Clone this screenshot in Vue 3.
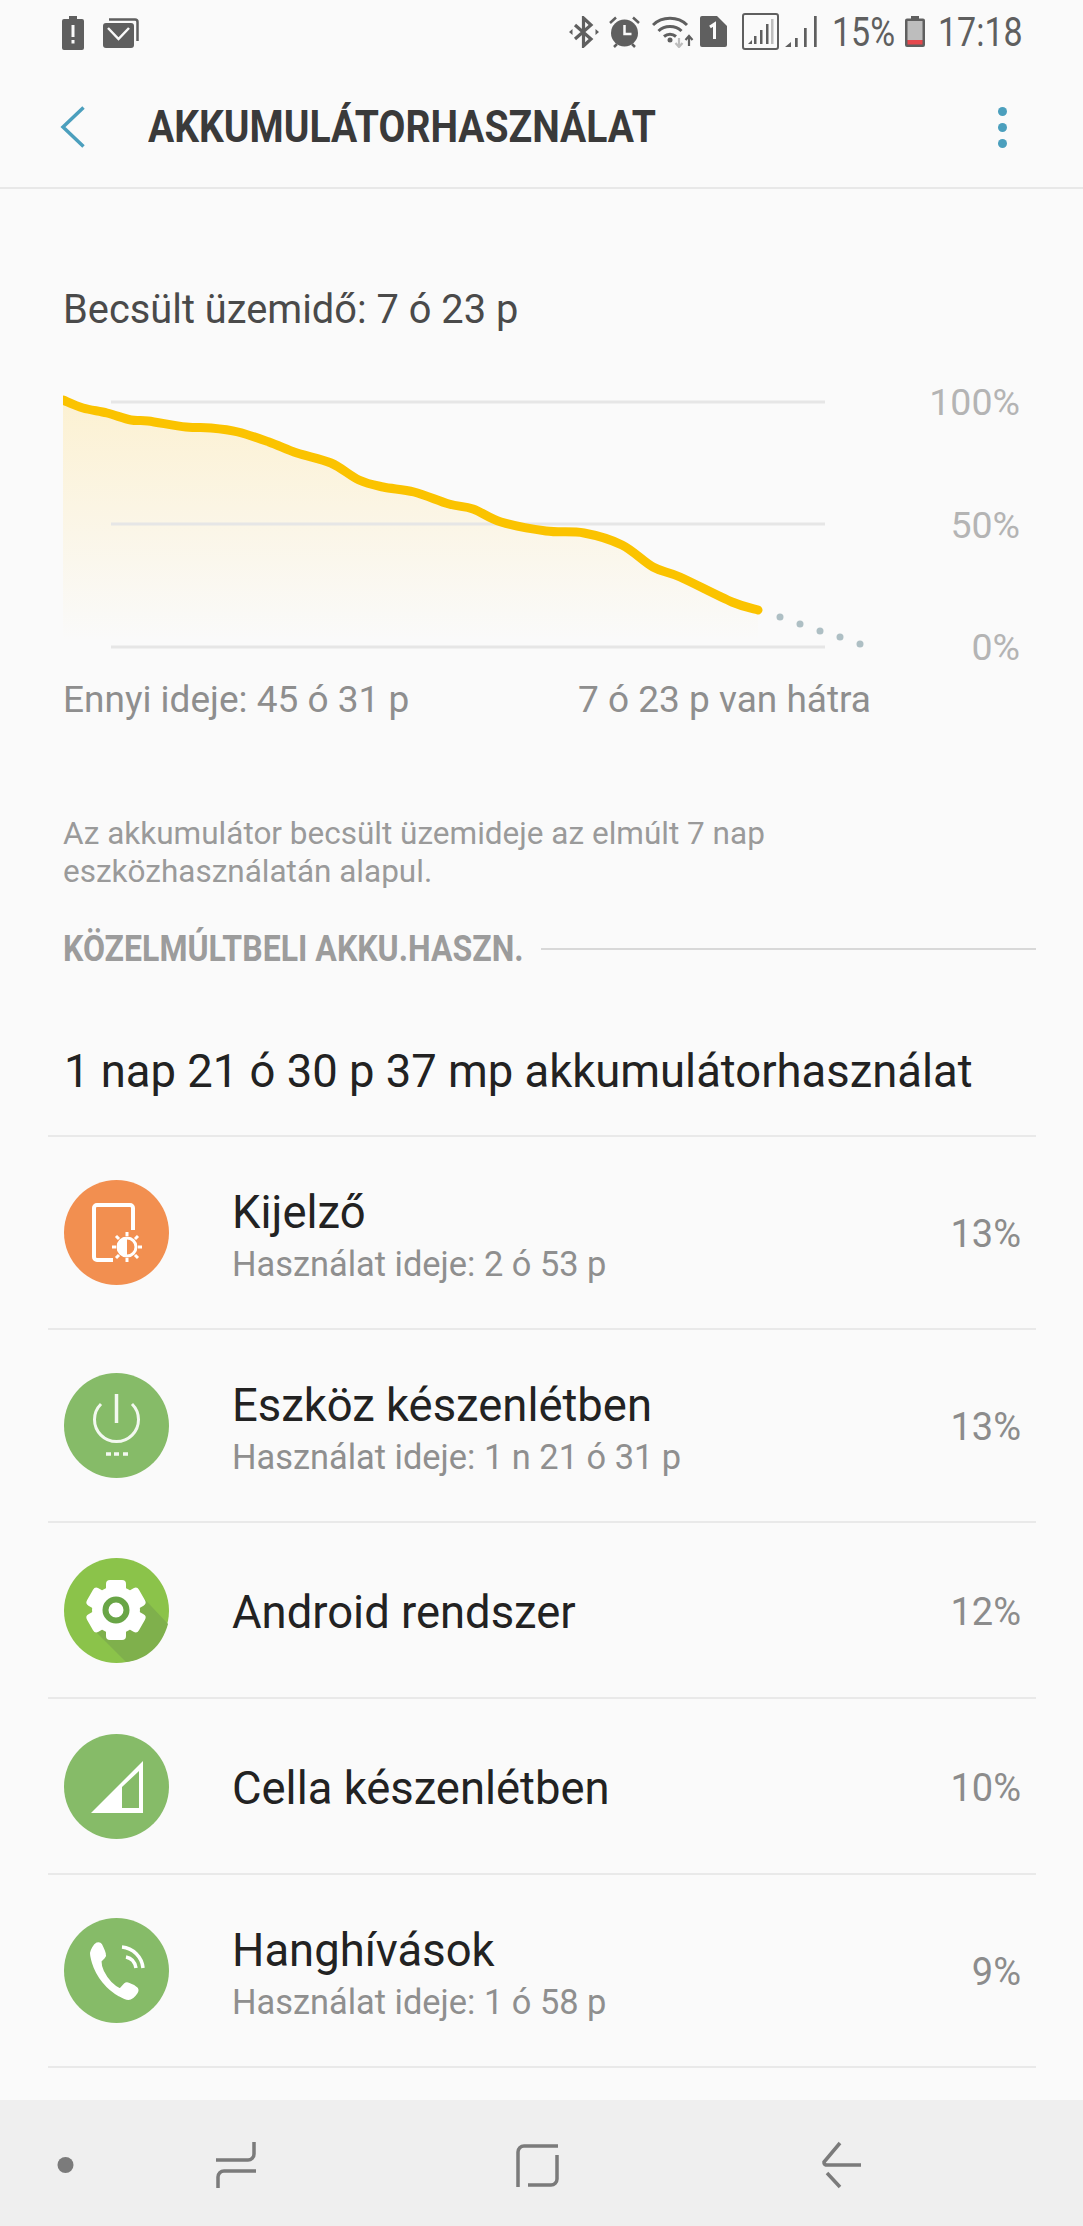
<template>
  <div class="screen">
    <div class="status-bar">
      <svg class="ic" width="22" height="34" viewBox="0 0 22 34">
        <path d="M7 0h8v3h5a2 2 0 0 1 2 2v27a2 2 0 0 1-2 2H2a2 2 0 0 1-2-2V5a2 2 0 0 1 2-2h5z" fill="#5f5f5f" />
        <path d="M9.500 9h3v12h-3zM9.500 24h3v3.500h-3z" fill="#fafafa" />
      </svg>
      <svg class="ic mail" width="36" height="30" viewBox="0 0 36 30">
        <path d="M6 1.500h26a2.500 2.500 0 0 1 2.500 2.500v19" fill="none" stroke="#5f5f5f" stroke-width="2.500" />
        <rect x="0" y="5" width="31" height="25" rx="3" fill="#5f5f5f" />
        <path d="M5 10l10.500 11L26 10" fill="none" stroke="#fafafa" stroke-width="2.500" />
      </svg>
      <span class="spacer"></span>
      <svg class="ic" width="30" height="32" viewBox="0 0 30 32">
        <path d="M6 9l16 14-7.500 7V2L22 9 6 23" fill="none" stroke="#5f5f5f" stroke-width="3.200" />
        <path d="M0 16l3.500-3v6zM30 16l-3.500-3v6z" fill="#5f5f5f" />
      </svg>
      <svg class="ic alarm" width="31" height="32" viewBox="0 0 31 32">
        <circle cx="15.500" cy="17" r="13.500" fill="#5f5f5f" />
        <path d="M15.500 9v9h7" fill="none" stroke="#fafafa" stroke-width="2.500" />
        <path d="M1 7l6-5.500M30 7l-6-5.500M5 31l3-3M26 31l-3-3" stroke="#5f5f5f" stroke-width="2.500" />
      </svg>
      <svg class="ic wifi" width="42" height="32" viewBox="0 0 42 32">
        <path d="M1 9C10 0 26 0 35 9M6.500 15c6-6 17-6 23 0M12 20.500c3.500-3 8.500-3 12 0" fill="none" stroke="#5f5f5f" stroke-width="3" />
        <circle cx="18" cy="24" r="2.500" fill="#5f5f5f" />
        <path d="M27 22v8M23.500 27l3.500 4 3.500-4" fill="none" stroke="#bdbdbd" stroke-width="2.200" />
        <path d="M37 30v-9M33.500 24l3.500-4 3.500 4" fill="none" stroke="#5f5f5f" stroke-width="2.200" />
      </svg>
      <svg class="ic sim" width="27" height="31" viewBox="0 0 27 31">
        <path d="M2 0h15l10 10v19a2 2 0 0 1-2 2H2a2 2 0 0 1-2-2V2a2 2 0 0 1 2-2z" fill="#5f5f5f" />
        <path d="M10 11l4.500-3v15" fill="none" stroke="#fafafa" stroke-width="3" />
      </svg>
      <svg class="ic box" width="37" height="37" viewBox="0 0 37 37">
        <rect x="1" y="1" width="35" height="35" rx="2" fill="none" stroke="#5f5f5f" stroke-width="2" />
        <path d="M6 31l4-4v4zM12 31v-8h2.500v8zM18 31V17h2.500v14zM24 31V11h2.500v20z" fill="#5f5f5f" />
        <path d="M29 31V6h2.500v25z" fill="#bdbdbd" />
      </svg>
      <svg class="ic sig" width="32" height="31" viewBox="0 0 32 31">
        <path d="M0 31l6-5v5zM10 31v-9h2.700v9zM19 31V12h2.700v19zM29 31V0h2.700v31z" fill="#5f5f5f" />
      </svg>
      <span class="st-text pct"><span>15%</span></span>
      <svg class="ic batt" width="20" height="31" viewBox="0 0 20 31">
        <path d="M6 0h8v2.500h4a2 2 0 0 1 2 2V29a2 2 0 0 1-2 2H2a2 2 0 0 1-2-2V4.500a2 2 0 0 1 2-2h4z" fill="#5f5f5f" />
        <rect x="2.500" y="5" width="15" height="19" fill="#bdbdbd" />
        <rect x="2.500" y="24" width="15" height="4.500" fill="#e5484d" />
      </svg>
      <span class="st-text clock"><span>17:18</span></span>
    </div>

    <header class="app-bar">
      <svg class="back" width="26" height="42" viewBox="0 0 26 42">
        <path d="M23.500 1.500L3 21l20.500 19.500" fill="none" stroke="#4b9fbd" stroke-width="3.500" />
      </svg>
      <h1 class="title"><span>AKKUMULÁTORHASZNÁLAT</span></h1>
      <div class="more">
        <i></i><i></i><i></i>
      </div>
    </header>

    <section class="estimate">
      <p class="est-title">Becsült üzemidő: 7 ó 23 p</p>
      <div class="chart-wrap">
        <svg class="chart" width="810" height="265" viewBox="63 390 810 265">
          <defs>
            <linearGradient id="fill" x1="0" y1="0" x2="0" y2="1">
              <stop offset="0" stop-color="#fcf1d2" />
              <stop offset="1" stop-color="#fafafa" />
            </linearGradient>
          </defs>
          <path :d="areaPath" fill="url(#fill)" />
          <line x1="111" y1="402" x2="825" y2="402" class="grid" />
          <line x1="111" y1="524" x2="825" y2="524" class="grid" />
          <line x1="111" y1="647" x2="825" y2="647" class="grid" />
          <path :d="linePath" class="curve" />
          <circle v-for="d in dots" :key="d[0]" :cx="d[0]" :cy="d[1]" r="3.500" fill="#aebfc4" />
        </svg>
        <div class="y-labels">
          <span>100%</span>
          <span>50%</span>
          <span>0%</span>
        </div>
      </div>
      <div class="chart-foot">
        <span>Ennyi ideje: 45 ó 31 p</span>
        <span>7 ó 23 p van hátra</span>
      </div>
      <p class="note">Az akkumulátor becsült üzemideje az elmúlt 7 nap<br />eszközhasználatán alapul.</p>
    </section>

    <div class="section-head">
      <span class="section-label"><span>KÖZELMÚLTBELI AKKU.HASZN.</span></span>
      <span class="section-line"></span>
    </div>

    <p class="total">1 nap 21 ó 30 p 37 mp akkumulátorhasználat</p>

    <ul class="usage">
      <li v-for="item in items" :key="item.name" class="row" :class="{ tall: item.sub }">
        <svg class="row-icon" width="105" height="105" viewBox="0 0 105 105">
          <template v-if="item.icon === 'display'">
            <circle cx="52.500" cy="52.500" r="52.500" fill="#f28f50" />
            <path d="M69 50V28a3 3 0 0 0-3-3H33a3 3 0 0 0-3 3v49a3 3 0 0 0 3 3h16" fill="none" stroke="#fff" stroke-width="4" />
            <path d="M63 57a10 10 0 0 0 0 20z" fill="#fff" />
            <circle cx="63" cy="67" r="9" fill="none" stroke="#fff" stroke-width="3" />
            <path d="M63 52v4M63 78v4M48 67h4M74 67h4M52 56l3 3M74 56l-3 3M52 78l3-3M74 78l-3-3" stroke="#fff" stroke-width="3" />
          </template>
          <template v-else-if="item.icon === 'power'">
            <circle cx="52.500" cy="52.500" r="52.500" fill="#86bb68" />
            <path d="M37 31a22 22 0 1 0 31 0" fill="none" stroke="#fff" stroke-opacity=".9" stroke-width="3" />
            <path d="M52.500 21v29" stroke="#fff" stroke-opacity=".9" stroke-width="3.500" />
            <path d="M42 81h5M50 81h5M59 81h5" stroke="#fff" stroke-opacity=".9" stroke-width="3.500" />
          </template>
          <template v-else-if="item.icon === 'gear'">
            <circle cx="52.500" cy="52.500" r="52.500" fill="#8bc34a" />
            <path d="M30 72l32 32c20-2 36-16 42-38L72 32z" fill="#7fb04c" />
            <g fill="#fff">
              <circle cx="52" cy="52" r="24" />
              <rect v-for="a in gearTeeth" :key="a" x="42" y="22" width="20" height="14" rx="4" :transform="`rotate(${a} 52 52)`" />
            </g>
            <circle cx="52" cy="52" r="10.500" fill="#fff" stroke="#69a546" stroke-width="6" />
          </template>
          <template v-else-if="item.icon === 'signal'">
            <circle cx="52.500" cy="52.500" r="52.500" fill="#86bb68" />
            <path d="M27 79l52-52v52z" fill="#fff" />
            <path d="M58 53l17-16v37H58z" fill="#86bb68" />
          </template>
          <template v-else>
            <circle cx="52.500" cy="52.500" r="52.500" fill="#86bb68" />
            <path d="M39 53.500c4 8 9 14 17 18l5-5.500c1-1 2-1 3-.5 3 1 8 4 9 5 1 1.500.5 3-.5 4.500-2 3-5 6-8 6-2 0-5-1-9-3.500C43 71 33 58 29 45c-1.500-5-2-8-2-10 .5-3 3-8 6-9.500 1.500-.5 3-.5 4 1 1 2 3.500 7 4 10 .5 1 0 2-1 3l-3.500 3.500c0 3.500 1 7.500 2.500 10.500z" fill="#fff" stroke="#fff" stroke-width="2" stroke-linejoin="round" />
            <path d="M58 29c11 1 20 10 21 21M62 39c5 1 9 5 10 11" fill="none" stroke="#fff" stroke-width="3.500" />
          </template>
        </svg>
        <div class="row-text">
          <div class="row-name">{{ item.name }}</div>
          <div v-if="item.sub" class="row-sub">{{ item.sub }}</div>
        </div>
        <div class="row-pct">{{ item.pct }}</div>
      </li>
    </ul>

    <nav class="nav-bar">
      <svg width="1083" height="126" viewBox="0 2100 1083 126">
        <circle cx="65.500" cy="2165" r="8" fill="#7b7b7b" />
        <g fill="none" stroke="#7b7b7b" stroke-width="3.500">
          <path d="M216 2160h32a6 6 0 0 0 6-6v-12M256 2171h-32a6 6 0 0 0-6 6v11" />
          <path d="M558 2146h-34a6 6 0 0 0-6 6v35M557 2155v24a6 6 0 0 1-6 6h-23" />
          <path d="M840 2143l-16 19a3 3 0 0 0 2 3h35M827 2173l13 14" />
        </g>
      </svg>
    </nav>
  </div>
</template>

<script setup>
const curve = [
  [63, 400], [83, 408], [107, 413], [131, 420], [148, 421], [186, 427], [211, 428], [238, 432],
  [269, 442], [297, 453], [331, 463], [359, 480], [383, 487], [414, 492], [449, 504], [473, 509],
  [501, 522], [546, 531], [584, 533], [622, 545], [653, 567], [680, 577], [732, 602], [758, 610]
]

// catmull-rom through the sampled points
function smooth(pts) {
  let d = `M${pts[0][0]} ${pts[0][1]}`
  for (let i = 0; i < pts.length - 1; i++) {
    const p0 = pts[i - 1] || pts[i]
    const p1 = pts[i]
    const p2 = pts[i + 1]
    const p3 = pts[i + 2] || p2
    const c1x = p1[0] + (p2[0] - p0[0]) / 6
    const c1y = p1[1] + (p2[1] - p0[1]) / 6
    const c2x = p2[0] - (p3[0] - p1[0]) / 6
    const c2y = p2[1] - (p3[1] - p1[1]) / 6
    d += `C${c1x} ${c1y} ${c2x} ${c2y} ${p2[0]} ${p2[1]}`
  }
  return d
}

const linePath = smooth(curve)
const areaPath = linePath + 'L758 640L63 640Z'

const dots = [[780, 617], [800, 624], [820, 631], [840, 637], [860, 644]]
const gearTeeth = [0, 60, 120, 180, 240, 300]

const items = [
  { name: 'Kijelző', sub: 'Használat ideje: 2 ó 53 p', pct: '13%', icon: 'display' },
  { name: 'Eszköz készenlétben', sub: 'Használat ideje: 1 n 21 ó 31 p', pct: '13%', icon: 'power' },
  { name: 'Android rendszer', pct: '12%', icon: 'gear' },
  { name: 'Cella készenlétben', pct: '10%', icon: 'signal' },
  { name: 'Hanghívások', sub: 'Használat ideje: 1 ó 58 p', pct: '9%', icon: 'call' }
]
</script>

<style scoped>
.screen {
  width: 1083px;
  height: 2226px;
  background: #fafafa;
  font-family: Roboto, "Liberation Sans", sans-serif;
  display: flex;
  flex-direction: column;
  overflow: hidden;
}

.status-bar {
  height: 70px;
  padding: 16px 62px 0 62px;
  box-sizing: border-box;
  display: flex;
  align-items: flex-start;
}

.ic {
  flex: none;
}

.mail {
  margin-left: 19px;
  margin-top: 2px;
}

.spacer {
  flex: 1;
}

.alarm {
  margin-left: 10px;
}

.wifi {
  margin-left: 12px;
}

.sim {
  margin-left: 6px;
}

.box {
  margin-left: 15px;
  margin-top: -3px;
}

.sig {
  margin-left: 6px;
}

.st-text {
  font-size: 40px;
  line-height: 34px;
  color: #5f5f5f;
  white-space: nowrap;
}

.st-text span {
  display: inline-block;
  transform: scaleX(0.85);
  transform-origin: left center;
}

.pct {
  width: 60px;
  margin-left: 15px;
}

.batt {
  margin-left: 13px;
}

.clock {
  width: 83px;
  margin-left: 13px;
}

.app-bar {
  height: 119px;
  box-sizing: border-box;
  border-bottom: 2px solid #e8e8e8;
  padding: 0 76px 3px 60px;
  display: flex;
  align-items: center;
}

.back {
  flex: none;
}

.title {
  flex: 1;
  margin: 0 0 0 62px;
  font-size: 44px;
  font-weight: 700;
  color: #3a3a3a;
  white-space: nowrap;
}

.title span {
  display: inline-block;
  transform: scaleX(0.887);
  transform-origin: left center;
}

.more {
  display: flex;
  flex-direction: column;
  gap: 7px;
}

.more i {
  width: 9px;
  height: 9px;
  border-radius: 50%;
  background: #4b9fbd;
}

.estimate {
  padding: 0 63px 0 63px;
}

.est-title {
  margin: 99px 0 0;
  font-size: 39.800px;
  line-height: 44px;
  color: #4a4a4a;
}

.chart-wrap {
  margin-top: 58px;
  height: 265px;
  display: flex;
  justify-content: space-between;
}

.chart {
  display: block;
  flex: none;
}

.grid {
  stroke: #e6e6e6;
  stroke-width: 3;
}

.curve {
  fill: none;
  stroke: #fbc300;
  stroke-width: 9;
  stroke-linecap: round;
  stroke-linejoin: round;
}

.y-labels {
  display: flex;
  flex-direction: column;
  justify-content: space-between;
  align-items: flex-end;
  margin-top: -10px;
  height: 289px;
  font-size: 37.500px;
  line-height: 44px;
  color: #b4b4b4;
}

.chart-foot {
  margin-top: 23px;
  width: 808px;
  display: flex;
  justify-content: space-between;
  font-size: 37px;
  line-height: 44px;
  color: #8e8e8e;
}

.note {
  margin: 93px 0 0;
  font-size: 31.500px;
  line-height: 38px;
  color: #9a9a9a;
}

.section-head {
  margin-top: 36px;
  padding: 0 47px 0 63px;
  display: flex;
  align-items: center;
  height: 44px;
}

.section-label {
  flex: none;
  width: 478px;
  font-size: 36px;
  font-weight: 700;
  color: #9c9c9c;
  white-space: nowrap;
}

.section-label span {
  display: inline-block;
  transform: scaleX(0.89);
  transform-origin: left center;
}

.section-line {
  flex: 1;
  height: 2px;
  background: #d8d8d8;
}

.total {
  margin: 76px 0 0 64px;
  font-size: 45.400px;
  line-height: 50px;
  color: #222;
  white-space: nowrap;
}

.usage {
  list-style: none;
  margin: 38px 47px 0 48px;
  padding: 0;
  border-top: 2px solid #e9e9e9;
}

.row {
  height: 176px;
  box-sizing: border-box;
  border-bottom: 2px solid #e9e9e9;
  padding: 0 15px 0 15px;
  display: flex;
  align-items: center;
}

.row.tall {
  height: 193px;
}

.row-icon {
  flex: none;
  margin-left: 1px;
}

.row-text {
  flex: 1;
  margin-left: 63px;
  padding-top: 6px;
}

.row-name {
  font-size: 45.400px;
  line-height: 50px;
  color: #222;
}

.row-sub {
  margin-top: 7px;
  font-size: 34.400px;
  line-height: 38px;
  color: #8f8f8f;
}

.row-pct {
  padding-top: 3px;
  font-size: 38px;
  color: #8c8c8c;
}

.nav-bar {
  margin-top: auto;
  height: 126px;
  background: #efefef;
  flex: none;
}

.nav-bar svg {
  display: block;
}
</style>
